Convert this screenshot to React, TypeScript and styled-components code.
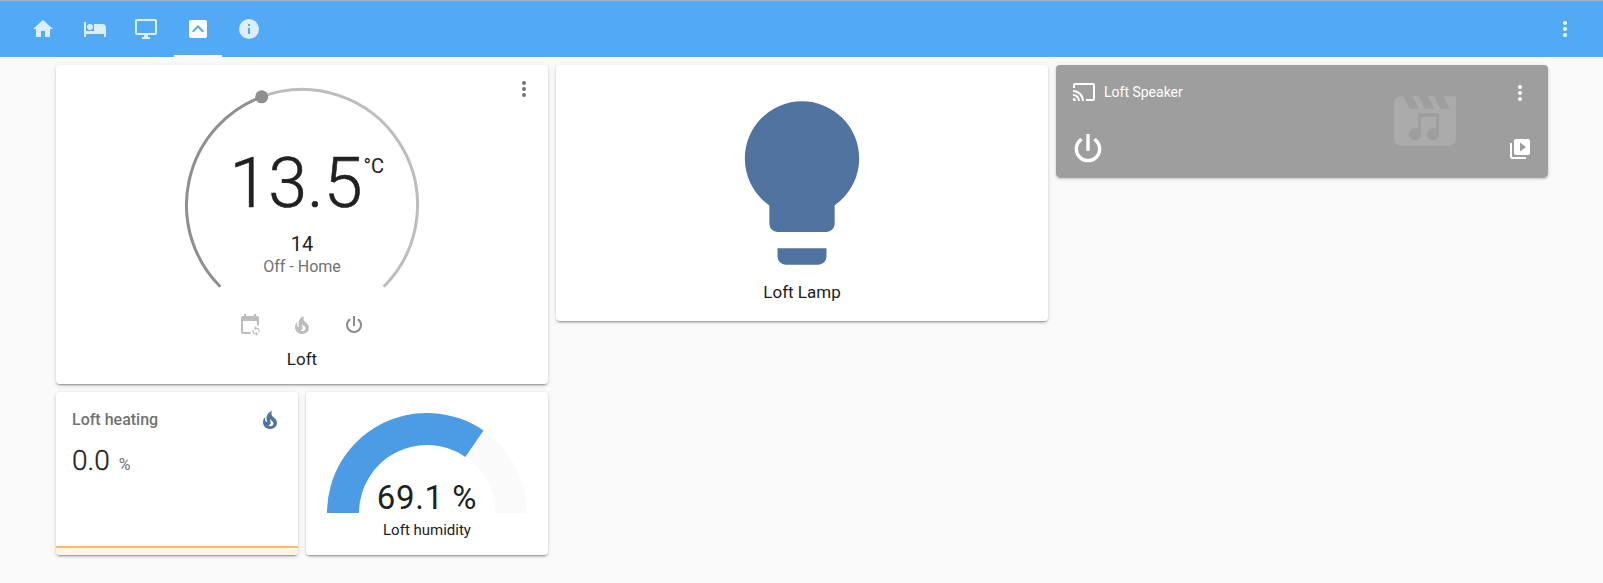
import React from 'react'
import styled, { createGlobalStyle } from 'styled-components'

const Global = createGlobalStyle`
  html, body { margin: 0; padding: 0; background: #fafafa; }
  body { font-family: Roboto, "Noto Sans", sans-serif; color: #212121; width: 1603px; height: 583px; overflow: hidden; }
`

const paths = {
  home: 'M10,20V14H14V20H19V12H22L12,3L2,12H5V20H10Z',
  bed: 'M19,7H11V14H3V5H1V20H3V17H21V20H23V11A4,4 0 0,0 19,7M7,13A3,3 0 0,0 10,10A3,3 0 0,0 7,7A3,3 0 0,0 4,10A3,3 0 0,0 7,13Z',
  monitor: 'M21,16H3V4H21M21,2H3C1.89,2 1,2.89 1,4V16A2,2 0 0,0 3,18H10V20H8V22H16V20H14V18H21A2,2 0 0,0 23,16V4C23,2.89 22.1,2 21,2Z',
  chevronBox: 'M19,3H5A2,2 0 0,0 3,5V19A2,2 0 0,0 5,21H19A2,2 0 0,0 21,19V5A2,2 0 0,0 19,3M12,8L18,14L16.6,15.4L12,10.8L7.4,15.4L6,14L12,8Z',
  info: 'M13,9H11V7H13M13,17H11V11H13M12,2A10,10 0 0,0 2,12A10,10 0 0,0 12,22A10,10 0 0,0 22,12A10,10 0 0,0 12,2Z',
  dots: 'M12,16A2,2 0 0,1 14,18A2,2 0 0,1 12,20A2,2 0 0,1 10,18A2,2 0 0,1 12,16M12,10A2,2 0 0,1 14,12A2,2 0 0,1 12,14A2,2 0 0,1 10,12A2,2 0 0,1 12,10M12,4A2,2 0 0,1 14,6A2,2 0 0,1 12,8A2,2 0 0,1 10,6A2,2 0 0,1 12,4Z',
  power: 'M16.56,5.44L15.11,6.89C16.84,7.94 18,9.83 18,12A6,6 0 0,1 12,18A6,6 0 0,1 6,12C6,9.83 7.16,7.94 8.88,6.88L7.44,5.44C5.36,6.88 4,9.28 4,12A8,8 0 0,0 12,20A8,8 0 0,0 20,12C20,9.28 18.64,6.88 16.56,5.44M13,3H11V13H13',
  fire: 'M17.66 11.2C17.43 10.9 17.15 10.64 16.89 10.38C16.22 9.78 15.46 9.35 14.82 8.72C13.33 7.26 13 4.85 13.95 3C13 3.23 12.17 3.75 11.46 4.32C8.87 6.4 7.85 10.07 9.07 13.22C9.11 13.32 9.15 13.42 9.15 13.55C9.15 13.77 9 13.97 8.8 14.05C8.57 14.15 8.33 14.09 8.14 13.93C8.08 13.88 8.04 13.83 8 13.76C6.87 12.33 6.69 10.28 7.45 8.64C5.78 10 4.87 12.3 5 14.47C5.06 14.97 5.12 15.47 5.29 15.97C5.43 16.57 5.7 17.17 6 17.7C7.08 19.43 8.95 20.67 10.96 20.92C13.1 21.19 15.39 20.8 17.03 19.32C18.86 17.66 19.5 15 18.56 12.72L18.43 12.46C18.22 12 17.66 11.2 17.66 11.2M14.5 17.5C14.22 17.74 13.76 18 13.4 18.1C12.28 18.5 11.16 17.94 10.5 17.28C11.69 17 12.4 16.12 12.61 15.23C12.78 14.43 12.46 13.77 12.33 13C12.21 12.26 12.23 11.63 12.5 10.94C12.69 11.32 12.89 11.7 13.13 12C13.9 13 15.11 13.44 15.37 14.8C15.41 14.94 15.43 15.08 15.43 15.23C15.46 16.05 15.1 16.95 14.5 17.5H14.5Z',
  bulb: 'M12,2A7,7 0 0,0 5,9C5,11.38 6.19,13.47 8,14.74V17A1,1 0 0,0 9,18H15A1,1 0 0,0 16,17V14.74C17.81,13.47 19,11.38 19,9A7,7 0 0,0 12,2M9,21A1,1 0 0,0 10,22H14A1,1 0 0,0 15,21V20H9V21Z',
  cast: 'M1,10V12A9,9 0 0,1 10,21H12C12,14.92 7.07,10 1,10M1,14V16A5,5 0 0,1 6,21H8A7,7 0 0,0 1,14M1,18V21H4A3,3 0 0,0 1,18M21,3H3C1.89,3 1,3.89 1,5V8H3V5H21V19H14V21H21A2,2 0 0,0 23,19V5C23,3.89 22.1,3 21,3Z',
  playBoxes: 'M4,6H2V20A2,2 0 0,0 4,22H18V20H4V6M20,2H8A2,2 0 0,0 6,4V16A2,2 0 0,0 8,18H20A2,2 0 0,0 22,16V4A2,2 0 0,0 20,2M12,14.5V5.5L18,10L12,14.5Z',
  calendar: 'M19,3H18V1H16V3H8V1H6V3H5A2,2 0 0,0 3,5V19A2,2 0 0,0 5,21H12.5V19H5V8H19V12.5H21V5A2,2 0 0,0 19,3Z',
  sync: 'M18,13V14.5A3.5,3.5 0 0,1 21.5,18C21.5,18.6 21.35,19.15 21.1,19.65L20.2,18.75C20.3,18.5 20.35,18.25 20.35,18A2.35,2.35 0 0,0 18,15.65V17.2L15.9,15.1L18,13M18,23V21.5A3.5,3.5 0 0,1 14.5,18C14.5,17.4 14.65,16.85 14.9,16.35L15.8,17.25C15.7,17.5 15.65,17.75 15.65,18A2.35,2.35 0 0,0 18,20.35V18.8L20.1,20.9L18,23Z',
  movie: 'M18,4L20,8H17L15,4H13L15,8H12L10,4H8L10,8H7L5,4H4A2,2 0 0,0 2,6V18A2,2 0 0,0 4,20H20A2,2 0 0,0 22,18V4H18ZM9.6,9.5H16.6V16.3A2,2 0 1,1 15.6,14.57V10.7H10.7V16.3A2,2 0 1,1 9.7,14.57V9.5Z',
}

const Icon = ({ d, size = 24, color = 'currentColor' }: { d: string; size?: number; color?: string }) => (
  <svg width={size} height={size} viewBox="0 0 24 24" fill={color} fillRule="evenodd" style={{ display: 'block', flex: 'none' }}>
    <path d={d} />
  </svg>
)

const Page = styled.div`
  width: 1603px;
  height: 583px;
  display: flex;
  flex-direction: column;
`

const Header = styled.header`
  height: 57px;
  flex: none;
  box-sizing: border-box;
  background: #52a9f5;
  border-top: 1px solid #9fb3c6;
  display: flex;
  align-items: stretch;
  justify-content: space-between;
  padding: 0 26px 0 19px;
  color: #fff;
`

const Tabs = styled.nav`
  display: flex;
  align-items: stretch;
`

const Tab = styled.div<{ $active?: boolean }>`
  width: 48px;
  margin-right: 3.5px;
  display: flex;
  align-items: center;
  justify-content: center;
  box-sizing: border-box;
  color: ${({ $active }) => ($active ? '#fff' : 'rgba(255,255,255,0.8)')};
  border-bottom: 2px solid ${({ $active }) => ($active ? '#fff' : 'transparent')};
  border-top: 2px solid transparent;
`

const HeaderAction = styled.div`
  display: flex;
  align-items: center;
  width: 24px;
`

const Columns = styled.main`
  display: grid;
  grid-template-columns: repeat(3, 492px);
  column-gap: 8px;
  padding: 8px 0 0 56px;
  align-items: start;
`

const Column = styled.div`
  display: flex;
  flex-direction: column;
  gap: 8px;
`

const Card = styled.section`
  background: #fff;
  border-radius: 4px;
  box-shadow: 0 2px 2px 0 rgba(0,0,0,0.14), 0 1px 5px 0 rgba(0,0,0,0.12), 0 3px 1px -2px rgba(0,0,0,0.2);
  position: relative;
  overflow: hidden;
`

const ThermostatCard = styled(Card)`
  height: 319px;
  display: flex;
  flex-direction: column;
  align-items: center;
`

const MoreButton = styled.div<{ $color: string; $inset: number }>`
  position: absolute;
  top: ${({ $inset }) => $inset}px;
  right: ${({ $inset }) => $inset}px;
  color: ${({ $color }) => $color};
`

const Dial = styled.div`
  width: 240px;
  height: 230px;
  margin-top: 20px;
  position: relative;
  flex: none;
`

const DialArc = styled.svg`
  position: absolute;
  left: 0;
  top: 0;
`

const DialText = styled.div`
  position: absolute;
  inset: 0;
  display: flex;
  flex-direction: column;
  align-items: center;
`

const Temperature = styled.div`
  margin: 57px 12px 0 0;
  height: 82px;
  font-size: 70px;
  line-height: 82px;
  font-weight: 300;
  -webkit-text-stroke: 0.6px #212121;
  position: relative;
`

const TemperatureUnit = styled.span`
  position: absolute;
  left: 100%;
  top: 12px;
  margin-left: 1px;
  font-size: 20px;
  line-height: 24px;
  font-weight: 400;
  -webkit-text-stroke: 0;
`

const SetPoint = styled.div`
  margin-top: 8px;
  font-size: 20px;
  line-height: 24px;
`

const ModeLabel = styled.div`
  font-size: 16px;
  line-height: 22px;
  color: #727272;
`

const ModeRow = styled.div`
  display: flex;
  gap: 28px;
  margin-top: -2px;
`

const ModeIcon = styled.div<{ $color: string }>`
  color: ${({ $color }) => $color};
`

const CardName = styled.div`
  font-size: 17px;
  line-height: 20px;
  text-align: center;
`

const ThermostatName = styled(CardName)`
  margin-top: 12px;
`

const BottomRow = styled.div`
  display: grid;
  grid-template-columns: 242px 242px;
  column-gap: 8px;
`

const SensorCard = styled(Card)`
  height: 163px;
  box-sizing: border-box;
  padding: 16px;
`

const SensorTop = styled.div`
  display: flex;
  justify-content: space-between;
  align-items: flex-start;
`

const SensorName = styled.div`
  font-size: 16px;
  line-height: 20px;
  font-weight: 500;
  color: #727272;
  margin-top: 2px;
`

const SensorValue = styled.div`
  margin-top: 9px;
  font-size: 28px;
  line-height: 40px;
  font-weight: 300;
  -webkit-text-stroke: 0.3px #212121;
  display: flex;
  align-items: baseline;
`

const SensorUnit = styled.span`
  font-size: 16px;
  font-weight: 400;
  color: #727272;
  margin-left: 9px;
  -webkit-text-stroke: 0;
`

const Graph = styled.div`
  position: absolute;
  left: 0;
  right: 0;
  bottom: 0;
  height: 9px;
  background: #fdf3e6;
  border-top: 2px solid #f9bd6a;
  box-sizing: border-box;
`

const GaugeCard = styled(Card)`
  height: 163px;
  display: flex;
  flex-direction: column;
  align-items: center;
`

const GaugeBox = styled.div`
  position: relative;
  width: 200px;
  height: 100px;
  margin-top: 21px;
`

const GaugeValue = styled.div`
  position: absolute;
  left: 0;
  right: 0;
  bottom: -4px;
  text-align: center;
  font-size: 33px;
  line-height: 38px;
  font-weight: 400;
  letter-spacing: 0.6px;
`

const GaugeName = styled.div`
  font-size: 15px;
  line-height: 20px;
  margin-top: 7px;
`

const LampCard = styled(Card)`
  height: 256px;
  display: flex;
  flex-direction: column;
  align-items: center;
`

const LampBulb = styled.div`
  margin-top: 20px;
  color: #51739f;
`

const LampName = styled(CardName)`
  margin-top: 1px;
`

const MediaCard = styled(Card)`
  height: 112px;
  background: #9e9e9e;
  color: #fff;
`

const MediaHeader = styled.div`
  display: flex;
  align-items: center;
  gap: 8px;
  padding: 15px 0 0 16px;
  font-size: 14px;
  line-height: 24px;
`

const MediaArt = styled.div`
  position: absolute;
  left: 332px;
  top: 19px;
  color: #ababab;
`

const MediaControls = styled.div`
  position: absolute;
  left: 12px;
  right: 16px;
  bottom: 8px;
  display: flex;
  align-items: center;
  justify-content: space-between;
`

const gaugeAngle = (value: number) => Math.PI * (1 - value / 100)

const Gauge = ({ value }: { value: number }) => {
  const a = gaugeAngle(value)
  const x1 = 100 + 100 * Math.cos(a)
  const y1 = 100 - 100 * Math.sin(a)
  const x2 = 100 + 68 * Math.cos(a)
  const y2 = 100 - 68 * Math.sin(a)
  return (
    <svg width="200" height="100" viewBox="0 0 200 100" style={{ display: 'block' }}>
      <path d="M0,100A100,100 0 0,1 200,100H168A68,68 0 0,0 32,100Z" fill="#fafafa" />
      <path d={`M0,100A100,100 0 0,1 ${x1},${y1}L${x2},${y2}A68,68 0 0,0 32,100Z`} fill="#4c9be5" />
    </svg>
  )
}

export default function App() {
  return (
    <Page>
      <Global />
      <Header>
        <Tabs>
          <Tab><Icon d={paths.home} /></Tab>
          <Tab><Icon d={paths.bed} /></Tab>
          <Tab><Icon d={paths.monitor} /></Tab>
          <Tab $active><Icon d={paths.chevronBox} /></Tab>
          <Tab><Icon d={paths.info} /></Tab>
        </Tabs>
        <HeaderAction><Icon d={paths.dots} /></HeaderAction>
      </Header>
      <Columns>
        <Column>
          <ThermostatCard>
            <MoreButton $color="#727272" $inset={12}><Icon d={paths.dots} /></MoreButton>
            <Dial>
              <DialArc width="240" height="230" viewBox="0 0 240 230" fill="none" strokeWidth="3">
                <path d="M38.3,201.7A115.5,115.5 0 0,1 79.7,11.8" stroke="#8f8f8f" />
                <path d="M79.7,11.8A115.5,115.5 0 0,1 201.7,201.7" stroke="#bdbdbd" />
                <circle cx="79.7" cy="11.8" r="6.5" fill="#8f8f8f" />
              </DialArc>
              <DialText>
                <Temperature>13.5<TemperatureUnit>°C</TemperatureUnit></Temperature>
                <SetPoint>14</SetPoint>
                <ModeLabel>Off - Home</ModeLabel>
              </DialText>
            </Dial>
            <ModeRow>
              <ModeIcon $color="#bdbdbd">
                <svg width="24" height="24" viewBox="0 0 24 24" fill="currentColor" style={{ display: 'block' }}>
                  <path d={paths.calendar} />
                  <path d={paths.sync} />
                </svg>
              </ModeIcon>
              <ModeIcon $color="#bdbdbd"><Icon d={paths.fire} /></ModeIcon>
              <ModeIcon $color="#8a8a8a"><Icon d={paths.power} /></ModeIcon>
            </ModeRow>
            <ThermostatName>Loft</ThermostatName>
          </ThermostatCard>
          <BottomRow>
            <SensorCard>
              <SensorTop>
                <SensorName>Loft heating</SensorName>
                <Icon d={paths.fire} color="#51739f" />
              </SensorTop>
              <SensorValue>0.0<SensorUnit>%</SensorUnit></SensorValue>
              <Graph />
            </SensorCard>
            <GaugeCard>
              <GaugeBox>
                <Gauge value={69.1} />
                <GaugeValue>69.1 %</GaugeValue>
              </GaugeBox>
              <GaugeName>Loft humidity</GaugeName>
            </GaugeCard>
          </BottomRow>
        </Column>
        <Column>
          <LampCard>
            <LampBulb><Icon d={paths.bulb} size={196} /></LampBulb>
            <LampName>Loft Lamp</LampName>
          </LampCard>
        </Column>
        <Column>
          <MediaCard>
            <MediaHeader><Icon d={paths.cast} />Loft Speaker</MediaHeader>
            <MoreButton $color="#fff" $inset={16}><Icon d={paths.dots} /></MoreButton>
            <MediaArt><Icon d={paths.movie} size={74} /></MediaArt>
            <MediaControls>
              <Icon d={paths.power} size={40} />
              <Icon d={paths.playBoxes} />
            </MediaControls>
          </MediaCard>
        </Column>
      </Columns>
    </Page>
  )
}
